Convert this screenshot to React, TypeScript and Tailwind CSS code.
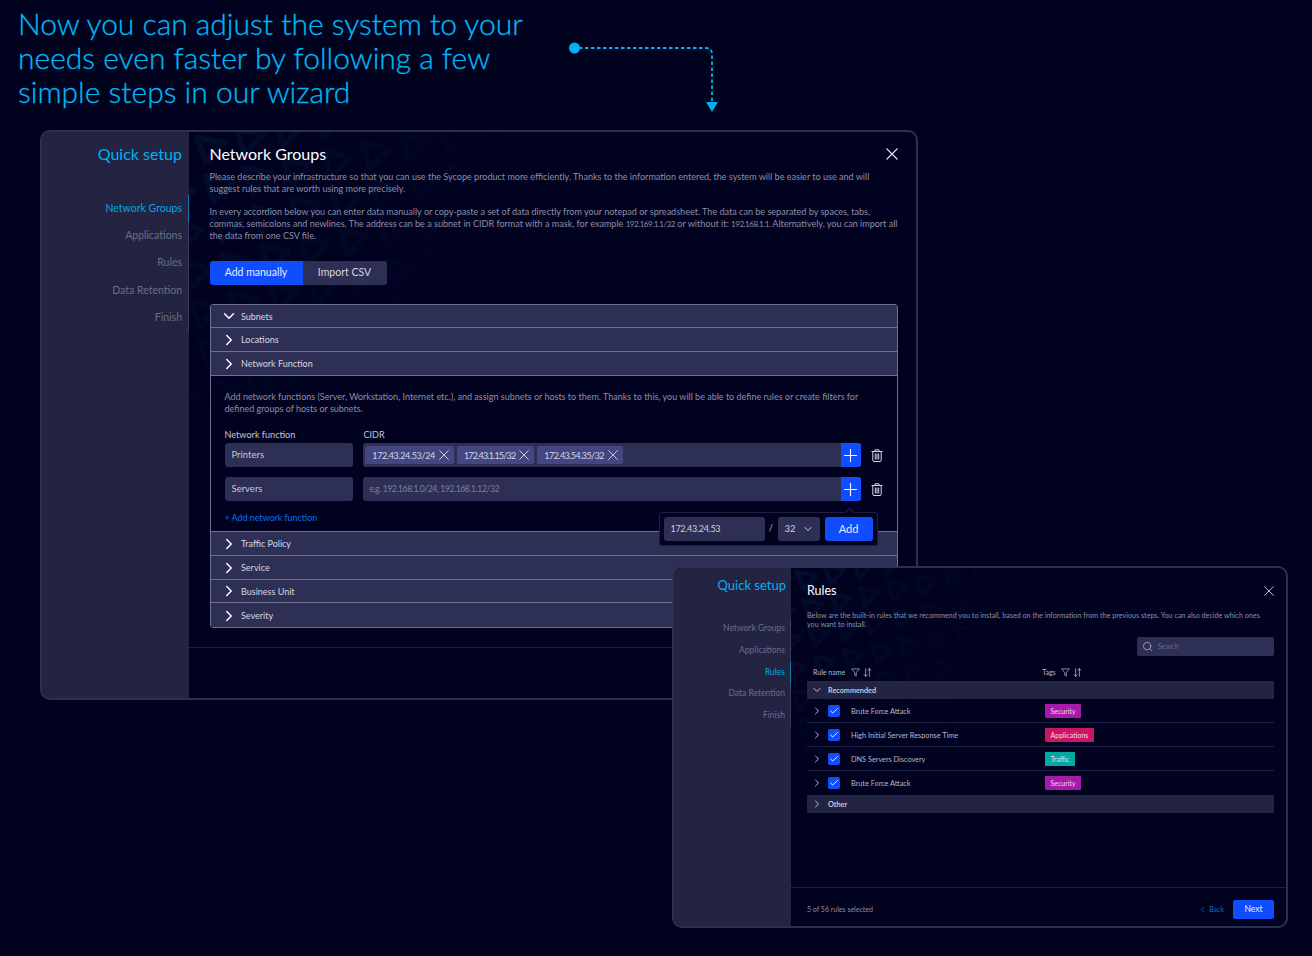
import React from "react";
import { Check, ChevronDown, ChevronRight, ChevronLeft, Search } from "lucide-react";

const font = { fontFamily: "Lato, sans-serif" };

function XIcon({ size, sw = 1 }: { size: number; sw?: number }) {
  return (
    <svg width={size} height={size} viewBox="0 0 12 12" fill="none" stroke="currentColor" strokeWidth={sw} className="shrink-0">
      <path d="M0.5 0.5L11.5 11.5M11.5 0.5L0.5 11.5" />
    </svg>
  );
}
function PlusIcon() {
  return (
    <svg width="13" height="13" viewBox="0 0 13 13" fill="none" stroke="#fff" strokeWidth="1.1">
      <path d="M6.5 0V13M0 6.5H13" />
    </svg>
  );
}
function TrashIcon() {
  return (
    <svg width="12" height="13" viewBox="0 0 12 13" fill="none" stroke="#d6d6e2" strokeWidth="1" className="shrink-0">
      <path d="M0.5 2.5H11.5M4 2.5V0.8H8V2.5M1.8 2.5V11.3Q1.8 12.5 3 12.5H9Q10.2 12.5 10.2 11.3V2.5M4.3 4.5V10.5M6 4.5V10.5M7.7 4.5V10.5" />
    </svg>
  );
}
function Funnel({ className = "" }: { className?: string }) {
  return (
    <svg viewBox="0 0 12 12" className={className} fill="none" stroke="currentColor" strokeWidth="0.9" strokeLinejoin="round">
      <path d="M0.8 1.2h10.4L7 6.2v4.6l-2-1.4V6.2z" />
    </svg>
  );
}
function SortIcon({ className = "" }: { className?: string }) {
  return (
    <svg viewBox="0 0 12 12" className={className} fill="none" stroke="currentColor" strokeWidth="1" strokeLinecap="round" strokeLinejoin="round">
      <path d="M3.5 1v10M1.5 9l2 2 2-2M8.5 11V1M6.5 3l2-2 2 2" />
    </svg>
  );
}

function Pattern({ id, w, h, scale }: { id: string; w: number; h: number; scale: number }) {
  return (
    <svg width={w} height={h} className="absolute left-0 top-0 pointer-events-none" fill="none">
      <defs>
        <pattern id={id} width={40 * scale} height={40 * scale} patternUnits="userSpaceOnUse" patternTransform="rotate(-12)">
          <path
            d={`M${7 * scale} ${7 * scale}L${32 * scale} ${18 * scale}L${10 * scale} ${33 * scale}Z`}
            stroke="#03102f"
            strokeWidth={6 * scale}
            strokeLinejoin="round"
          />
        </pattern>
        <radialGradient id={id + "g"} cx="0" cy="0" r="1">
          <stop offset="0" stopColor="#fff" stopOpacity="0.9" />
          <stop offset="1" stopColor="#fff" stopOpacity="0" />
        </radialGradient>
        <mask id={id + "m"}>
          <rect width={w} height={h} fill={`url(#${id}g)`} />
        </mask>
      </defs>
      <rect width={w} height={h} fill={`url(#${id})`} mask={`url(#${id}m)`} />
    </svg>
  );
}

function Side({ items, active, big }: { items: string[]; active: string; big?: boolean }) {
  return (
    <div className={big ? "w-[147px] shrink-0 bg-[#222442] flex flex-col items-end" : "w-[117px] shrink-0 bg-[#222442] flex flex-col items-end"}>
      <div className={big ? "pt-[12px] pr-[7px] text-[16px] leading-[20px] text-[#00b2f0]" : "pt-[9px] pr-[5px] text-[13px] leading-[16px] text-[#00b2f0]"}>Quick setup</div>
      <div className={big ? "mt-[31px] border-r border-[#3a3c5e] flex flex-col w-full items-end" : "mt-[25px] border-r border-[#3a3c5e] flex flex-col w-full items-end"}>
        {items.map((t) => (
          <div
            key={t}
            className={
              (big ? "h-[27.2px] pr-[6px] text-[10.5px] leading-[27px] " : "h-[21.75px] pr-[5px] text-[8.5px] leading-[21.75px] ") +
              (t === active ? "text-[#00a8e6] relative" : "text-[#6c6e87]")
            }
          >
            {t}
            {t === active && <span className="absolute right-[-1px] top-0 bottom-0 w-px bg-[#0a7fb0]" />}
          </div>
        ))}
      </div>
    </div>
  );
}

function AccRow({ label, open, last }: { label: string; open?: boolean; last?: boolean }) {
  return (
    <div className={"h-[23.8px] bg-[#2e2f55] flex items-center pl-[9.5px] pt-[1px] text-[9px] text-[#d6d6e2] " + (last ? "" : "border-b border-[#70718f]")}>
      {open ? <ChevronDown className="w-[18px] h-[18px] text-white mr-[3px]" strokeWidth={1.9} /> : <ChevronRight className="w-[18px] h-[18px] text-white mr-[3px]" strokeWidth={1.9} />}
      {label}
    </div>
  );
}

function Chip({ label, tight }: { label: string; tight: string }) {
  return (
    <div className={"h-[18px] pl-[7px] pr-[5px] rounded-[2px] bg-[#434680] flex items-center gap-[4px] text-[9px] text-[#d4d4e4] " + tight}>
      {label}
      <span className="text-[#e4e4ee]">
        <XIcon size={10} />
      </span>
    </div>
  );
}

function NetRow({ name, children }: { name: string; children: React.ReactNode }) {
  return (
    <div className="flex items-center h-[24px]">
      <div className="w-[129px] h-[24px] rounded-[3px] bg-[#2e2f55] flex items-center pl-[7px] text-[9.5px] text-[#c6c6d6]">{name}</div>
      <div className="ml-[10px] w-[498px] h-[24px] rounded-[3px] bg-[#2e2f55] flex items-center overflow-hidden">
        <div className="flex-1 flex items-center gap-[3px] pl-[2px]">{children}</div>
        <div className="w-[20px] h-[24px] bg-[#0f4dff] flex items-center justify-center">
          <PlusIcon />
        </div>
      </div>
      <span className="ml-[10px] flex">
        <TrashIcon />
      </span>
    </div>
  );
}

function Popover() {
  return (
    <div className="absolute left-[448px] top-[207px] w-[219px] h-[34px] rounded-[3px] bg-[#000220] border border-[#1f2040] flex items-center pl-[4px] z-10">
      <span className="absolute left-[186px] top-[-4px] w-[7px] h-[7px] rotate-45 bg-[#000220] border-l border-t border-[#1f2040]" />
      <div className="w-[101px] h-[24px] rounded-[3px] bg-[#2e2f55] flex items-center pl-[7px] pt-[1px] text-[9px] tracking-[-0.3px] text-[#d0d0de]">172.43.24.53</div>
      <span className="w-[13px] text-center text-[9.5px] text-[#b4b4c8]">/</span>
      <div className="w-[42px] h-[24px] rounded-[3px] bg-[#2e2f55] flex items-center pl-[7px] pt-[1px] gap-[6px] text-[9.5px] text-[#d0d0de]">
        32 <ChevronDown className="w-[12px] h-[12px]" strokeWidth={2} />
      </div>
      <div className="ml-[5px] w-[48px] h-[24px] rounded-[3px] bg-[#0f4dff] flex items-center justify-center pt-[2px] text-[11px] text-[#e8ecff]">Add</div>
    </div>
  );
}

function Window1() {
  return (
    <div className="absolute left-[40px] top-[130px] w-[878px] h-[570px] rounded-[10px] border-2 border-[#2e2f55] overflow-hidden flex bg-[#000220]">
      <Side big items={["Network Groups", "Applications", "Rules", "Data Retention", "Finish"]} active="Network Groups" />
      <div className="flex-1 min-w-0 relative">
        <Pattern id="p1" w={330} h={330} scale={1} />
        <span className="absolute right-[18px] top-[16px] text-[#e6e6f0]">
          <XIcon size={12} sw={1.1} />
        </span>
        <div className="relative pl-[20.5px] pt-[11px]">
          <div className="text-[16px] leading-[22px] text-white">Network Groups</div>
          <p className="mt-[6px] text-[9.05px] leading-[11.7px] text-[#8e8fa6] w-[670px]">
            Please describe your infrastructure so that you can use the Sycope product more efficiently. Thanks to the information entered, the system will be easier to use and will suggest rules that are worth using more precisely.
          </p>
          <p className="mt-[11.5px] text-[9.05px] leading-[11.7px] text-[#8e8fa6] w-[692px] whitespace-nowrap">
            In every accordion below you can enter data manually or copy-paste a set of data directly from your notepad or spreadsheet. The data can be separated by spaces, tabs,
            <br />
            commas, semicolons and newlines. The address can be a subnet in CIDR format with a mask, for example <span className="text-[8px] tracking-[-0.45px]">192.169.1.1/32</span> or without it: <span className="text-[8px] tracking-[-0.45px]">192.168.1.1.</span> Alternatively, you can import all
            <br />
            the data from one CSV file.
          </p>
          <div className="mt-[18.5px] flex h-[24px] w-[177px] rounded-[3px] overflow-hidden text-[10.5px]">
            <div className="w-[93px] bg-[#0f4dff] text-[#e8ecff] flex items-center justify-center">Add manually</div>
            <div className="flex-1 bg-[#2e2f55] text-[#d6d6e2] flex items-center justify-center">Import CSV</div>
          </div>
          <div className="mt-[19px] relative rounded-[3px] border border-[#70718f] w-[688px]">
            <AccRow label="Subnets" open />
            <AccRow label="Locations" />
            <AccRow label="Network Function" />
            <div className="h-[156px] px-[14px] pt-[15px] border-b border-[#70718f]">
              <p className="text-[9px] leading-[11.7px] text-[#8e8fa6] w-[650px]">
                Add network functions (Server, Workstation, Internet etc.), and assign subnets or hosts to them. Thanks to this, you will be able to define rules or create filters for defined groups of hosts or subnets.
              </p>
              <div className="mt-[15px] flex text-[9.1px] leading-[11px] text-[#c6c6d6]">
                <span className="w-[139px]">Network function</span>
                <span>CIDR</span>
              </div>
              <div className="mt-[3px] flex flex-col gap-[10px]">
                <NetRow name="Printers">
                  <Chip label="172.43.24.53/24" tight="tracking-[-0.35px]" />
                  <Chip label="172.43.1.15/32" tight="tracking-[-0.8px]" />
                  <Chip label="172.43.54.35/32" tight="tracking-[-0.55px]" />
                </NetRow>
                <NetRow name="Servers">
                  <span className="pl-[4px] text-[8.5px] tracking-[-0.35px] text-[#7f8098]">e.g. 192.168.1.0/24, 192.168.1.12/32</span>
                </NetRow>
              </div>
              <div className="mt-[10.5px] text-[8.9px] leading-[11px] text-[#0f6fe0]">+ Add network function</div>
            </div>
            <AccRow label="Traffic Policy" />
            <AccRow label="Service" />
            <AccRow label="Business Unit" />
            <AccRow label="Severity" last />
            <Popover />
          </div>
        </div>
        <div className="absolute left-0 right-0 bottom-[50px] border-t border-[#1f2040]" />
      </div>
    </div>
  );
}

function Tag({ label, color }: { label: string; color: string }) {
  return <span className={"h-[14px] px-[5.5px] rounded-[1px] text-[7px] leading-[15px] text-[#f0d6f0] " + color}>{label}</span>;
}

function RuleRow({ name, tag, last }: { name: string; tag: React.ReactNode; last?: boolean }) {
  return (
    <div className={"h-[24px] pt-[1px] flex items-center text-[7.3px] text-[#b8b8c8] " + (last ? "" : "border-b border-[#1f2040]")}>
      <ChevronRight className="ml-[4px] w-[12px] h-[12px] text-[#d0d0de]" strokeWidth={1.8} />
      <span className="ml-[5px] w-[12px] h-[12px] rounded-[2px] bg-[#0f4dff] flex items-center justify-center">
        <Check className="w-[10px] h-[10px] text-white" strokeWidth={2.2} />
      </span>
      <span className="ml-[11px] w-[194px] pt-[3px]">{name}</span>
      {tag}
    </div>
  );
}

function Window2() {
  return (
    <div className="absolute left-[672px] top-[566px] w-[616px] h-[362px] rounded-[10px] border-2 border-[#2e2f55] overflow-hidden flex bg-[#000220] z-20">
      <Side items={["Network Groups", "Applications", "Rules", "Data Retention", "Finish"]} active="Rules" />
      <div className="flex-1 min-w-0 relative flex flex-col">
        <Pattern id="p2" w={230} h={230} scale={0.72} />
        <span className="absolute right-[12px] top-[18px] text-[#e6e6f0]">
          <XIcon size={10} />
        </span>
        <div className="relative pl-[16px] pr-[12px] pt-[14px] flex-1">
          <div className="text-[12.5px] leading-[18px] text-white">Rules</div>
          <p className="mt-[10.5px] text-[7.2px] leading-[9.4px] text-[#8e8fa6] w-[458px]">
            Below are the built-in rules that we recommend you to install, based on the information from the previous steps. You can also decide which ones you want to install.
          </p>
          <div className="mt-[7.5px] flex justify-end">
            <div className="w-[137px] h-[19px] rounded-[2px] bg-[#2e2f55] flex items-center pl-[5px] gap-[5px] text-[7px] text-[#6c6e87]">
              <Search className="w-[11px] h-[11px] text-[#c6c6d6]" strokeWidth={1.4} />
              Search
            </div>
          </div>
          <div className="mt-[8px] h-[17px] flex items-center text-[7px] text-[#b8b8c8]">
            <span className="ml-[6px]">Rule name</span>
            <Funnel className="ml-[6px] w-[9px] h-[9px] text-[#c6c6d6]" />
            <SortIcon className="ml-[3px] w-[9px] h-[9px] text-[#c6c6d6]" />
            <span className="ml-[170px]">Tags</span>
            <Funnel className="ml-[5px] w-[9px] h-[9px] text-[#c6c6d6]" />
            <SortIcon className="ml-[3px] w-[9px] h-[9px] text-[#c6c6d6]" />
          </div>
          <div className="h-[18px] bg-[#222442] flex items-center text-[7.3px] text-[#d6d6e2] font-semibold">
            <ChevronDown className="ml-[4px] w-[12px] h-[12px] text-[#d0d0de]" strokeWidth={1.8} />
            <span className="ml-[5px] pt-[3px]">Recommended</span>
          </div>
          <RuleRow name="Brute Force Attack" tag={<Tag label="Security" color="bg-[#a81aa8]" />} />
          <RuleRow name="High Initial Server Response Time" tag={<Tag label="Applications" color="bg-[#cc1664]" />} />
          <RuleRow name="DNS Servers Discovery" tag={<Tag label="Traffic" color="bg-[#00aa9e]" />} />
          <RuleRow name="Brute Force Attack" tag={<Tag label="Security" color="bg-[#a81aa8]" />} last />
          <div className="h-[18px] bg-[#222442] flex items-center text-[7.3px] text-[#d6d6e2] font-semibold">
            <ChevronRight className="ml-[4px] w-[12px] h-[12px] text-[#d0d0de]" strokeWidth={1.8} />
            <span className="ml-[5px] pt-[3px]">Other</span>
          </div>
        </div>
        <div className="relative h-[39px] border-t border-[#1f2040] flex items-start pt-[12px] pl-[16px] pr-[12px] text-[7px] leading-[19px] text-[#8e8fa6]">
          <span>5 of 56 rules selected</span>
          <span className="ml-auto flex items-center text-[#0a6fc0]">
            <ChevronLeft className="w-[9px] h-[9px]" strokeWidth={2} />
            <span className="ml-[2px]">Back</span>
          </span>
          <span className="ml-[9px] w-[41px] h-[19px] rounded-[2px] bg-[#0f4dff] text-[#e8ecff] text-[8.5px] flex items-center justify-center">Next</span>
        </div>
      </div>
    </div>
  );
}

export default function App() {
  return (
    <div className="relative w-[1312px] h-[956px] overflow-hidden bg-[#00021e]" style={font}>
      <h1 className="absolute left-[18px] top-[6px] w-[540px] text-[30px] leading-[34px] font-light text-[#00b8f5] [-webkit-text-stroke:0.3px_#00b8f5]">
        Now you can adjust the system to your needs even faster by following a few simple steps in our wizard
      </h1>
      <svg className="absolute left-[566px] top-[40px]" width="160" height="75" viewBox="0 0 160 75" fill="none">
        <circle cx="8.5" cy="8" r="5.5" fill="#00b2f0" />
        <path d="M13 8H139.5Q146 8 146 14V64" stroke="#00b2f0" strokeWidth="1.8" strokeDasharray="3.5 2.5" />
        <path d="M140 62H152L146 72Z" fill="#00b2f0" />
      </svg>
      <Window1 />
      <Window2 />
    </div>
  );
}
